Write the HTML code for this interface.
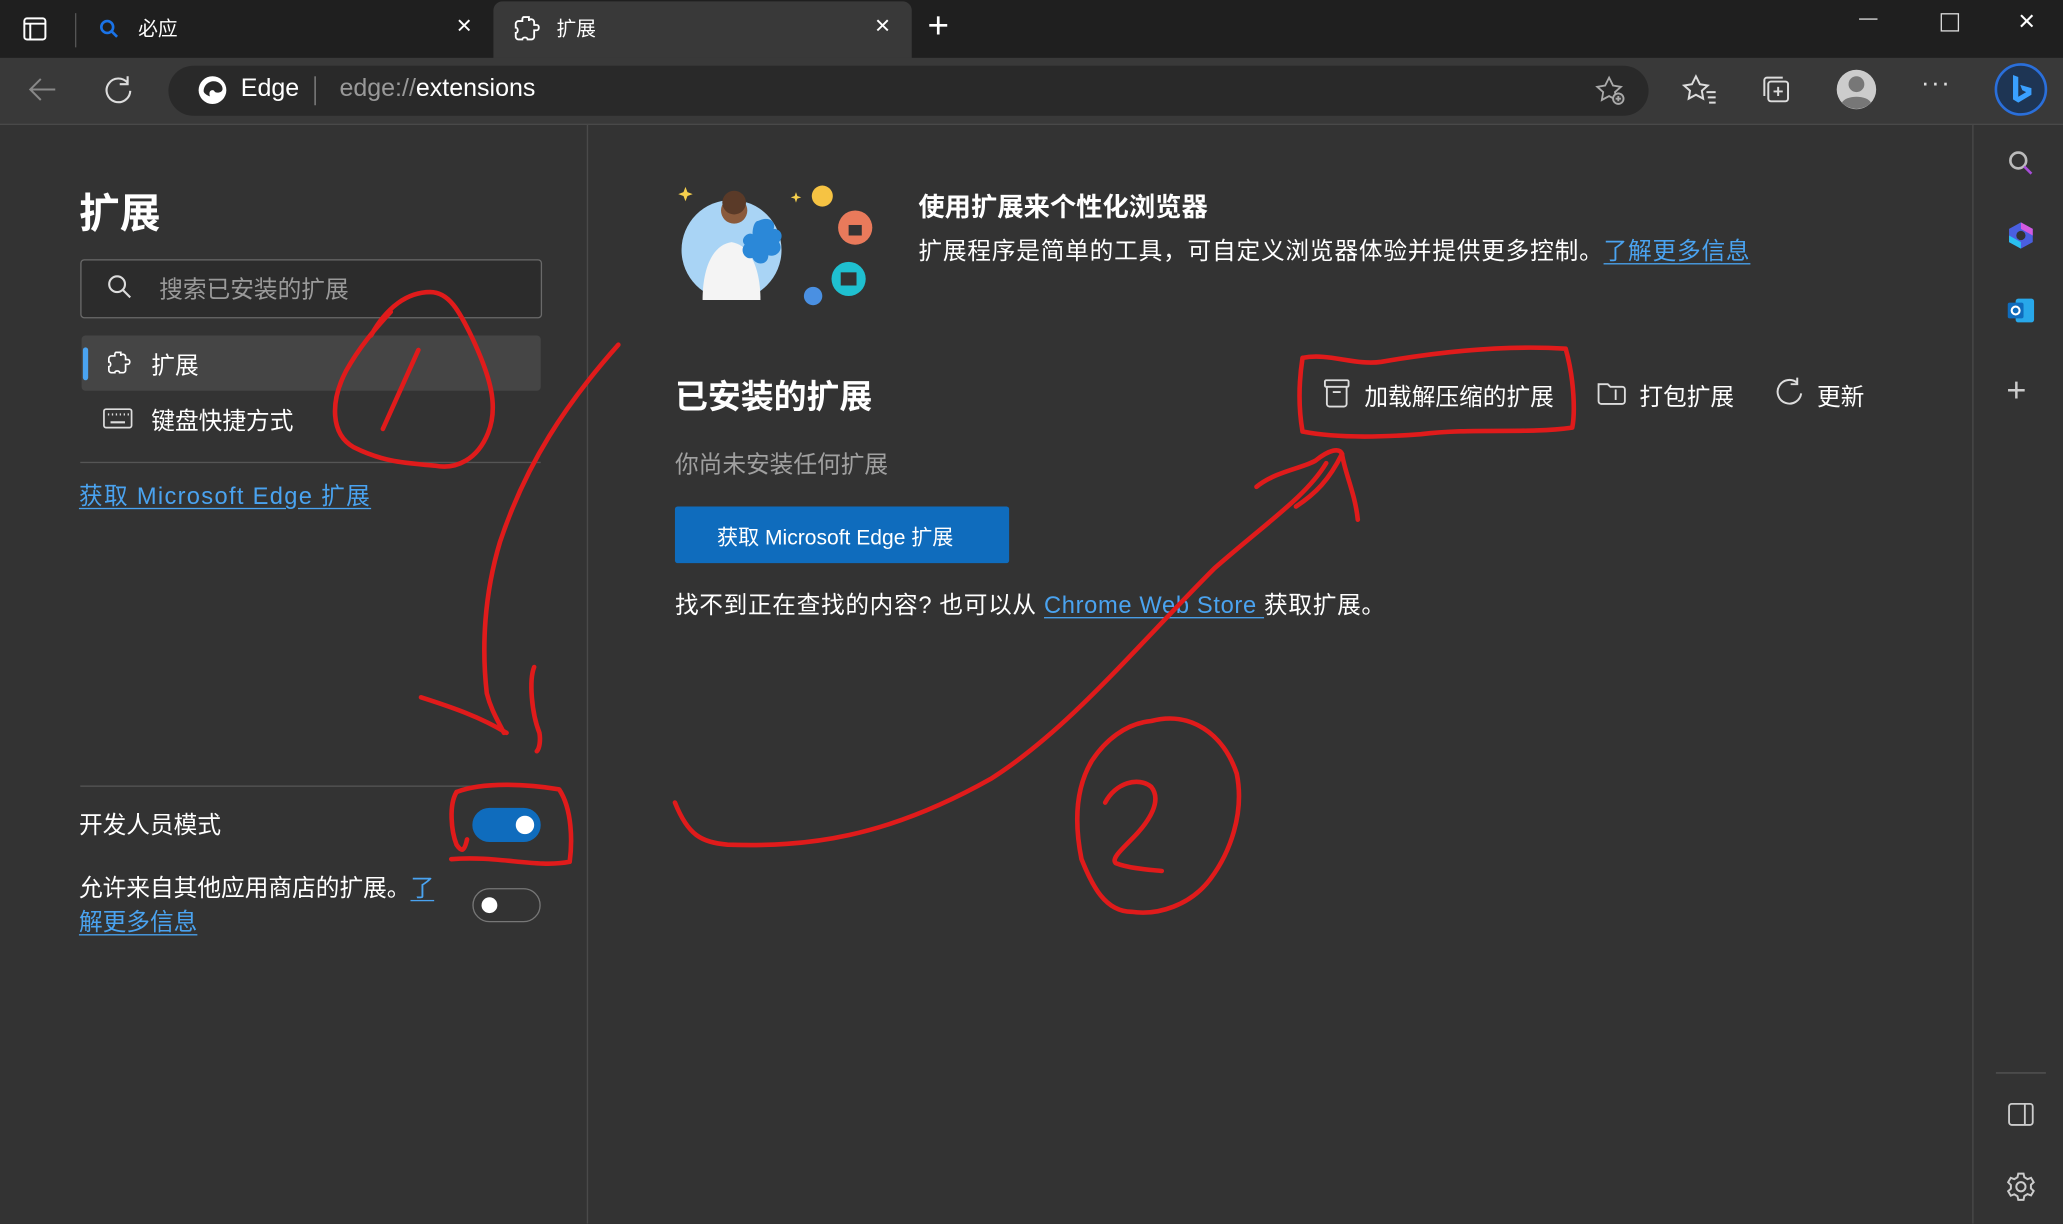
<!DOCTYPE html>
<html><head><meta charset="utf-8"><style>
html,body{margin:0;padding:0;width:2063px;height:1223px;overflow:hidden;background:#333}
#w{position:absolute;left:0;top:0;width:1568px;height:930px;transform:scale(1.31569);transform-origin:0 0;font-family:"Liberation Sans","Noto Sans CJK SC",sans-serif;color:#fff;background:#333}
.a{position:absolute;white-space:nowrap}
svg{position:absolute;overflow:visible}
.lk{color:#4aa3f0;text-decoration:underline;text-underline-offset:3px}
</style></head><body><div id="w">
<!-- tab bar -->
<div class="a" style="left:0;top:0;width:1568px;height:44px;background:#1f1f1f"></div>
<div class="a" style="left:375px;top:1px;width:318px;height:46px;background:#393939;border-radius:7px 7px 0 0"></div>
<div class="a" style="left:0;top:44px;width:1568px;height:50px;background:#393939"></div>
<div class="a" style="left:0;top:94px;width:1568px;height:1px;background:#4a4a4a"></div>
<svg style="left:17px;top:12px" width="20" height="20" viewBox="0 0 20 20" fill="none" stroke="#fff" stroke-width="1.5"><rect x="1.5" y="2" width="16" height="16" rx="2"/><line x1="1.5" y1="6" x2="17.5" y2="6"/><line x1="6" y1="6" x2="6" y2="18"/></svg>
<div class="a" style="left:57px;top:10px;width:1px;height:26px;background:#555"></div>
<svg style="left:75px;top:14px" width="16" height="16" viewBox="0 0 16 16" fill="none" stroke="#1a73e8" stroke-width="2"><circle cx="6.5" cy="6.5" r="4.5"/><line x1="10" y1="10" x2="14" y2="14"/></svg>
<div class="a" style="left:105px;top:11px;font-size:15px">必应</div>
<div class="a" style="left:347px;top:9px;font-size:20px;font-weight:300">×</div>
<svg style="left:390px;top:11px" width="20" height="22" viewBox="0 0 20 22" fill="none" stroke="#fff" stroke-width="1.4"><path d="M8 2h4v3c0-2 4-2 4 1v2h2c2 0 2 4 0 4h-2v5c0 1-1 2-2 2h-3c0-2-4-2-4 0H4c-1 0-2-1-2-2v-3c2 0 2-4 0-4V7c0-1 1-2 2-2h3V4c0-2 1-2 1-2z"/></svg>
<div class="a" style="left:423px;top:11px;font-size:15px">扩展</div>
<div class="a" style="left:665px;top:9px;font-size:20px;font-weight:300">×</div>
<div class="a" style="left:705px;top:4px;font-size:28px;font-weight:200">+</div>
<div class="a" style="left:1413px;top:14px;width:14px;height:1px;background:#ddd"></div>
<div class="a" style="left:1475px;top:10px;width:12px;height:12px;border:1px solid #ddd"></div>
<div class="a" style="left:1534px;top:3px;font-size:22px;font-weight:200">×</div>
<!-- toolbar -->
<svg style="left:20px;top:57px" width="24" height="22" viewBox="0 0 24 22" fill="none" stroke="#888" stroke-width="1.5"><path d="M22 11H3M11 3l-8 8 8 8"/></svg>
<svg style="left:78px;top:56px" width="24" height="24" viewBox="0 0 24 24" fill="none" stroke="#ddd" stroke-width="1.6"><path d="M19 7A9 9 0 1 0 21 13"/><path d="M19 2v6h-6"/></svg>
<div class="a" style="left:128px;top:50px;width:1125px;height:38px;background:#292929;border-radius:19px"></div>
<svg style="left:150px;top:57px" width="23" height="23" viewBox="0 0 24 24"><circle cx="12" cy="12" r="11" fill="#fff"/><path d="M5 13c0-5 4-8 8-8 4 0 7 3 7 6 0 2-2 3-4 3-3 0-2-2-4-2-2 0-3 2-2 5-3-1-5-3-5-4z" fill="#292929"/></svg>
<div class="a" style="left:183px;top:57px;font-size:19px">Edge</div>
<div class="a" style="left:239px;top:58px;width:1px;height:22px;background:#888"></div>
<div class="a" style="left:258px;top:57px;font-size:19px;color:#999">edge://<span style="color:#fff">extensions</span></div>
<svg style="left:1212px;top:57px" width="24" height="24" viewBox="0 0 24 24" fill="none" stroke="#aaa" stroke-width="1.4"><path d="M11 2l3 6 6 1-4.5 4 1 6L11 16l-5.5 3 1-6L2 9l6-1z"/><circle cx="18" cy="18" r="4" fill="#393939"/><path d="M18 16v4M16 18h4"/></svg>
<svg style="left:1279px;top:56px" width="26" height="24" viewBox="0 0 26 24" fill="none" stroke="#ddd" stroke-width="1.5"><path d="M10 2l3 6 6 1-4.5 4 1 6L10 16l-5.5 3 1-6L1 9l6-1z"/><path d="M18 14h7M19 18h6M20 22h5"/></svg>
<svg style="left:1338px;top:56px" width="24" height="24" viewBox="0 0 24 24" fill="none" stroke="#ddd" stroke-width="1.5"><rect x="6" y="6" width="15" height="15" rx="2"/><path d="M3 17V5a2 2 0 0 1 2-2h12"/><path d="M13.5 10v7M10 13.5h7"/></svg>
<svg style="left:1395px;top:52px" width="32" height="32" viewBox="0 0 32 32"><circle cx="16" cy="16" r="15" fill="#ccc"/><circle cx="16" cy="12" r="6" fill="#777"/><path d="M5 26c3-6 19-6 22 0a15 15 0 0 1-22 0z" fill="#777"/></svg>
<div class="a" style="left:1460px;top:52px;font-size:20px;color:#ddd;letter-spacing:1px">···</div>
<svg style="left:1515px;top:47px" width="42" height="42" viewBox="0 0 42 42"><circle cx="21" cy="21" r="19" fill="#1e3554" stroke="#2a6fdb" stroke-width="2"/><path d="M15 10l4 1.5v15l6-3.5-3-1.5-1.5-4L29 20v5L19 31l-4-2.5z" fill="#3aa0ff"/></svg>
<!-- right sidebar -->
<div class="a" style="left:1499px;top:95px;width:1px;height:835px;background:#4a4a4a"></div>
<svg style="left:1524px;top:112px" width="24" height="24" viewBox="0 0 24 24" fill="none" stroke="#bbb" stroke-width="2"><circle cx="10" cy="10" r="6"/><line x1="14.5" y1="14.5" x2="20" y2="20" stroke="#a64dd8"/></svg>
<svg style="left:1524px;top:167px" width="24" height="24" viewBox="0 0 24 24"><path d="M12 2l9 5v10l-9 5-9-5V7z" fill="#4a5fe0"/><path d="M12 2l9 5v5l-9-5z" fill="#d45ae0"/><path d="M3 12l9 5v5l-9-5z" fill="#2ac0f0"/><circle cx="12" cy="12" r="3.5" fill="#333"/></svg>
<svg style="left:1524px;top:224px" width="24" height="24" viewBox="0 0 24 24"><rect x="8" y="3" width="14" height="18" rx="2" fill="#28a8ea"/><rect x="2" y="6" width="12" height="12" rx="1.5" fill="#0f6cbd"/><circle cx="8" cy="12" r="3" fill="none" stroke="#fff" stroke-width="1.6"/></svg>
<div class="a" style="left:1525px;top:281px;font-size:26px;font-weight:200;color:#ccc">+</div>
<div class="a" style="left:1517px;top:815px;width:38px;height:1px;background:#555"></div>
<svg style="left:1526px;top:838px" width="20" height="18" viewBox="0 0 20 18" fill="none" stroke="#ccc" stroke-width="1.4"><rect x="1" y="1" width="18" height="16" rx="2"/><line x1="13" y1="1" x2="13" y2="17"/></svg>
<svg style="left:1524px;top:890px" width="24" height="24" viewBox="0 0 24 24" fill="none" stroke="#ccc" stroke-width="1.5"><circle cx="12" cy="12" r="3.5"/><path d="M10 2h4l.6 2.8 2.4 1.4 2.7-1 2 3.4-2.1 1.9v2.8l2.1 1.9-2 3.4-2.7-1-2.4 1.4L14 22h-4l-.6-2.8-2.4-1.4-2.7 1-2-3.4 2.1-1.9v-2.8L2.3 8.6l2-3.4 2.7 1 2.4-1.4z"/></svg>
<!-- left pane -->
<div class="a" style="left:446px;top:95px;width:1px;height:835px;background:#4a4a4a"></div>
<div class="a" style="left:60px;top:137px;font-size:31px;font-weight:bold">扩展</div>
<div class="a" style="left:61px;top:197px;width:349px;height:43px;border:1px solid #6a6a6a;border-radius:3px;background:#2c2c2c"></div>
<svg style="left:81px;top:208px" width="20" height="20" viewBox="0 0 20 20" fill="none" stroke="#ddd" stroke-width="1.6"><circle cx="8" cy="8" r="6"/><line x1="12.5" y1="12.5" x2="18" y2="18"/></svg>
<div class="a" style="left:121px;top:206px;font-size:18px;color:#9a9a9a">搜索已安装的扩展</div>
<div class="a" style="left:62px;top:255px;width:349px;height:42px;background:#454545;border-radius:3px"></div>
<div class="a" style="left:63px;top:264px;width:4px;height:25px;background:#4aa3f0;border-radius:2px"></div>
<svg style="left:80px;top:266px" width="20" height="20" viewBox="0 0 20 22" fill="none" stroke="#fff" stroke-width="1.4"><path d="M8 2h4v3c0-2 4-2 4 1v2h2c2 0 2 4 0 4h-2v5c0 1-1 2-2 2h-3c0-2-4-2-4 0H4c-1 0-2-1-2-2v-3c2 0 2-4 0-4V7c0-1 1-2 2-2h3V4c0-2 1-2 1-2z"/></svg>
<div class="a" style="left:115px;top:264px;font-size:18px">扩展</div>
<svg style="left:78px;top:310px" width="23" height="16" viewBox="0 0 23 16" fill="none" stroke="#ddd" stroke-width="1.3"><rect x="1" y="1" width="21" height="14" rx="1.5"/><path d="M4 5h1M7 5h1M10 5h1M13 5h1M16 5h1M19 5h1M6 11h11" stroke-width="1.6"/></svg>
<div class="a" style="left:115px;top:306px;font-size:18px">键盘快捷方式</div>
<div class="a" style="left:61px;top:351px;width:350px;height:1px;background:#555"></div>
<div class="a lk" style="left:60px;top:363px;font-size:18px;letter-spacing:1px">获取 Microsoft Edge 扩展</div>
<div class="a" style="left:61px;top:597px;width:350px;height:1px;background:#555"></div>
<div class="a" style="left:60px;top:613px;font-size:18px">开发人员模式</div>
<div class="a" style="left:359px;top:614px;width:52px;height:26px;background:#0f6cbd;border-radius:13px"></div>
<div class="a" style="left:392px;top:620px;width:14px;height:14px;background:#fff;border-radius:50%"></div>
<div class="a" style="left:60px;top:661px;font-size:18px">允许来自其他应用商店的扩展。<span class="lk">了</span></div>
<div class="a lk" style="left:60px;top:687px;font-size:18px">解更多信息</div>
<div class="a" style="left:359px;top:675px;width:50px;height:24px;border:1px solid #777;border-radius:13px"></div>
<div class="a" style="left:366px;top:682px;width:12px;height:12px;background:#fff;border-radius:50%"></div>
<!-- main -->
<svg style="left:514px;top:138px" width="160" height="100" viewBox="0 0 160 100">
<circle cx="42" cy="52" r="38" fill="#a9d4f5"/>
<path d="M20 90c0-25 8-42 22-44 14 2 22 20 22 44z" fill="#f4f4f4"/>
<circle cx="44" cy="22" r="10" fill="#8a5a3c"/><circle cx="44" cy="16" r="9" fill="#5a3a28"/>
<path d="M62 30c8-4 14 0 12 6 6 0 8 6 4 10 4 6-2 12-8 10 0 8-10 8-12 2-6 2-10-6-6-10-4-4 2-10 6-8 0-6 2-10 4-10z" fill="#2b88d8"/>
<circle cx="111" cy="11" r="8" fill="#f6c343"/><circle cx="136" cy="35" r="13" fill="#e97a5b"/><rect x="131" y="33" width="10" height="8" fill="#333"/>
<circle cx="131" cy="74" r="13" fill="#1fc0d0"/><rect x="125" y="69" width="12" height="10" fill="#333"/>
<circle cx="104" cy="87" r="7" fill="#4a90e2"/>
<path d="M7 4l1.5 4 4 1.5-4 1.5-1.5 4-1.5-4-4-1.5 4-1.5z" fill="#f6d04d"/>
<path d="M91 8l1 3 3 1-3 1-1 3-1-3-3-1 3-1z" fill="#f6d04d"/>
</svg>
<div class="a" style="left:698px;top:141px;font-size:20px;font-weight:bold">使用扩展来个性化浏览器</div>
<div class="a" style="left:698px;top:177px;font-size:18px;letter-spacing:0.6px">扩展程序是简单的工具，可自定义浏览器体验并提供更多控制。<span class="lk">了解更多信息</span></div>
<div class="a" style="left:513px;top:282px;font-size:25px;font-weight:bold">已安装的扩展</div>
<svg style="left:1006px;top:288px" width="20" height="22" viewBox="0 0 20 22" fill="none" stroke="#ddd" stroke-width="1.4"><rect x="1" y="1" width="18" height="5" rx="1"/><path d="M2.5 6v13a2 2 0 0 0 2 2h11a2 2 0 0 0 2-2V6M7 10h6"/></svg>
<div class="a" style="left:1037px;top:288px;font-size:18px">加载解压缩的扩展</div>
<svg style="left:1214px;top:288px" width="22" height="20" viewBox="0 0 22 20" fill="none" stroke="#ddd" stroke-width="1.4"><path d="M1 4h7l2 2h9a2 2 0 0 1 2 2v9a2 2 0 0 1-2 2H3a2 2 0 0 1-2-2z"/><path d="M14 8v8"/></svg>
<div class="a" style="left:1246px;top:288px;font-size:18px">打包扩展</div>
<svg style="left:1349px;top:287px" width="22" height="22" viewBox="0 0 22 22" fill="none" stroke="#ddd" stroke-width="1.5"><path d="M17 4A9 9 0 1 0 20 12"/><path d="M17 0v5h-5"/></svg>
<div class="a" style="left:1381px;top:288px;font-size:18px">更新</div>
<div class="a" style="left:513px;top:339px;font-size:18px;color:#a0a0a0">你尚未安装任何扩展</div>
<div class="a" style="left:513px;top:385px;width:254px;height:43px;background:#0f6cbd;border-radius:2px"></div>
<div class="a" style="left:545px;top:395px;font-size:16px">获取 Microsoft Edge 扩展</div>
<div class="a" style="left:513px;top:446px;font-size:18px;letter-spacing:0.5px">找不到正在查找的内容? 也可以从 <span class="lk">Chrome Web Store </span>获取扩展。</div>
<!-- red annotations -->
<svg style="left:0;top:0" width="1568" height="930" viewBox="0 0 1568 930" fill="none" stroke="#e01b1b" stroke-width="3.5" stroke-linecap="round" stroke-linejoin="round">
<path d="M282 255c12-22 28-33 45-33 14 0 22 14 32 35 14 30 20 52 12 72-8 20-24 28-40 25-20-2-38-2-62-14-18-10-18-35-6-58 10-18 22-32 34-45"/>
<path d="M318 266l-27 60"/>
<path d="M470 262c-40 45-70 90-90 150-12 40-14 80-10 115 3 12 8 20 13 30"/>
<path d="M320 530c25 8 45 15 65 27"/><path d="M406 507c-4 10-2 35 4 50 1 6 0 12-2 14"/>
<path d="M347 602c20-8 55-6 78-2 10 15 10 40 8 55-25 5-55-5-90-2"/><path d="M347 602c-6 10-4 30 0 40 4 6 6 5 8-4"/>
<path d="M990 272C1010 268 1030 278 1050 275C1090 268 1140 262 1190 265C1197 290 1197 315 1195 325C1160 330 1120 325 1080 330C1040 333 1010 332 990 328C986 305 988 285 990 272"/>
<path d="M513 610c10 25 20 30 40 32 60 2 120-5 200-50 60-38 110-100 170-160 40-35 70-55 85-80"/>
<path d="M955 370c15-12 35-14 45-20 10-8 18-10 20-5 2 14 10 30 12 50"/>
<path d="M1020 345c-10 20-20 30-35 40"/>
<path d="M875 548c30-8 55 10 65 40 6 30-5 60-20 80-15 20-40 28-60 25-20 0-30-20-38-40-6-30-4-55 8-75 10-15 25-28 45-30"/>
<path d="M840 610c8-15 25-20 35-12 8 10 0 25-15 40-10 10-15 15-12 18 10 4 25 5 35 6"/>
</svg>
</div></body></html>
